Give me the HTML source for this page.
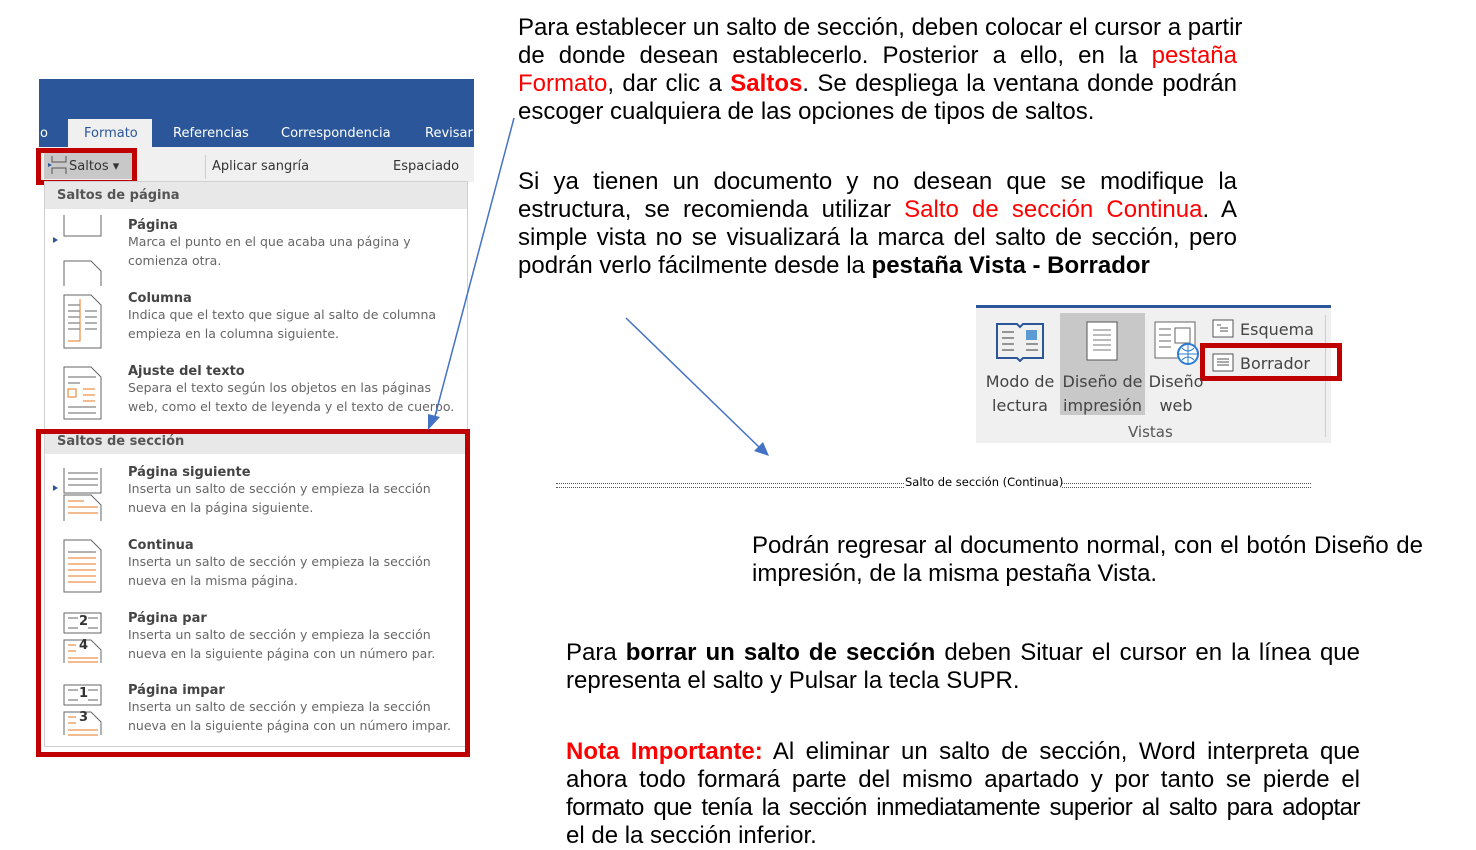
<!DOCTYPE html>
<html><head><meta charset="utf-8"><style>
*{margin:0;padding:0;box-sizing:border-box}
body{width:1476px;height:847px;background:#fff;position:relative;overflow:hidden;font-family:"Liberation Sans",Arial,sans-serif}
.a{position:absolute}
.ln{white-space:nowrap;text-align:justify;text-align-last:justify;height:28px;line-height:28px}
.ln.l{text-align-last:left}
.r{color:#f00}
.blk{font-size:24px;color:#000}
.ui{font-family:"DejaVu Sans","Liberation Sans",sans-serif}
.it .t{font-weight:bold;color:#444;font-size:13px}
.it .d{color:#666;font-size:12.5px;line-height:18.5px}
.it{position:absolute;left:128px}
</style></head><body>

<div class="a" style="left:39px;top:79px;width:435px;height:68px;background:#2b579a"></div>
<div class="a" style="left:68px;top:119px;width:84px;height:28px;background:#f0f0f0"></div>
<div class="a ui" style="left:40px;top:126px;color:#fff;font-size:13px">o</div>
<div class="a ui" style="left:84px;top:126px;color:#2b579a;font-size:13px">Formato</div>
<div class="a ui" style="left:173px;top:126px;color:#fff;font-size:13px">Referencias</div>
<div class="a ui" style="left:281px;top:126px;color:#fff;font-size:13px">Correspondencia</div>
<div class="a ui" style="left:425px;top:126px;color:#fff;font-size:13px">Revisar</div>
<div class="a" style="left:39px;top:147px;width:435px;height:35px;background:#f0f0f0"></div>
<div class="a" style="left:44px;top:151px;width:88px;height:28px;background:#c8c8c8"></div>
<svg class="a" style="left:46px;top:154px" width="22" height="22"><path d="M6 2v6h14V2M6 20v-6h14v6" fill="none" stroke="#555"/><path d="M2 9l4 2-4 2z" fill="#2b579a"/></svg>
<div class="a ui" style="left:69px;top:159px;color:#333;font-size:13px">Saltos ▾</div>
<div class="a" style="left:205px;top:155px;width:1px;height:24px;background:#ccc"></div>
<div class="a ui" style="left:212px;top:159px;color:#333;font-size:13px">Aplicar sangría</div>
<div class="a ui" style="left:393px;top:159px;color:#333;font-size:13px">Espaciado</div>
<div class="a" style="left:36px;top:148px;width:101px;height:37px;border:5px solid #c00000"></div>

<div class="a" style="left:44px;top:181px;width:424px;height:566px;background:#fff;border:1px solid #d0d0d0"></div>
<div class="a" style="left:45px;top:182px;width:422px;height:27px;background:#e8e8e8"></div>
<div class="a ui" style="left:57px;top:188px;font-size:13px;font-weight:bold;color:#555">Saltos de página</div>
<div class="a" style="left:45px;top:431px;width:422px;height:23px;background:#e8e8e8"></div>
<div class="a ui" style="left:57px;top:434px;font-size:13px;font-weight:bold;color:#555">Saltos de sección</div>

<svg class="a" style="left:50px;top:215px" width="60" height="530" fill="none" stroke="#666">
<path d="M14 0v21h37V0M14 71V46h27l10 10v15"/>
<path d="M3 22l5 3-5 3z" fill="#2b579a" stroke="none"/>
<path d="M14 80h27l10 10v43H14z M18 90h12M18 96h12M18 102h12M18 108h12M18 114h12M35 96h12M35 102h12M35 108h12M35 114h12" />
<path d="M30 84v42h-12" stroke="#e87722"/>
<path d="M14 152h27l10 10v42H14z M18 162h28M18 168h12M18 192h28M18 198h28"/>
<path d="M18 174h8v8h-8zM33 174h12M33 180h12M33 186h12" stroke="#e87722"/>
<path d="M14 253v25h37v-25M18 258h30M18 264h30M18 270h30"/>
<path d="M14 306V280h27l10 10v16"/>
<path d="M18 286h16M18 292h30M18 298h30" stroke="#e87722"/>
<path d="M3 270l5 3-5 3z" fill="#2b579a" stroke="none"/>
<path d="M14 325h27l10 10v42H14z M18 337h28"/>
<path d="M18 343h28M18 349h28M18 355h28M18 361h28M18 367h28" stroke="#e87722"/>
<path d="M14 398h37v20H14z M18 403h10M38 403h10M18 413h10M38 413h10"/>
<path d="M14 448v-23h27l10 10v13"/>
<path d="M18 430h8M18 436h8M18 443h30M18 447h30" stroke="#e87722"/>
<path d="M14 470h37v20H14z M18 475h10M38 475h10M18 485h10M38 485h10"/>
<path d="M14 520v-23h27l10 10v13"/>
<path d="M18 502h8M18 508h8M18 515h30M18 520h30" stroke="#e87722"/>
</svg>
<div class="a ui" style="left:79px;top:614px;font-size:13px;font-weight:bold;color:#333">2</div>
<div class="a ui" style="left:79px;top:638px;font-size:13px;font-weight:bold;color:#333">4</div>
<div class="a ui" style="left:79px;top:686px;font-size:13px;font-weight:bold;color:#333">1</div>
<div class="a ui" style="left:79px;top:710px;font-size:13px;font-weight:bold;color:#333">3</div>

<div class="it ui" style="top:218px"><div class="t">Página</div><div class="d">Marca el punto en el que acaba una página y<br>comienza otra.</div></div>
<div class="it ui" style="top:291px"><div class="t">Columna</div><div class="d">Indica que el texto que sigue al salto de columna<br>empieza en la columna siguiente.</div></div>
<div class="it ui" style="top:364px"><div class="t">Ajuste del texto</div><div class="d">Separa el texto según los objetos en las páginas<br>web, como el texto de leyenda y el texto de cuerpo.</div></div>
<div class="it ui" style="top:465px"><div class="t">Página siguiente</div><div class="d">Inserta un salto de sección y empieza la sección<br>nueva en la página siguiente.</div></div>
<div class="it ui" style="top:538px"><div class="t">Continua</div><div class="d">Inserta un salto de sección y empieza la sección<br>nueva en la misma página.</div></div>
<div class="it ui" style="top:611px"><div class="t">Página par</div><div class="d">Inserta un salto de sección y empieza la sección<br>nueva en la siguiente página con un número par.</div></div>
<div class="it ui" style="top:683px"><div class="t">Página impar</div><div class="d">Inserta un salto de sección y empieza la sección<br>nueva en la siguiente página con un número impar.</div></div>

<div class="a" style="left:36px;top:429px;width:434px;height:328px;border:5px solid #c00000"></div>

<svg class="a" style="left:0;top:0" width="1476" height="847">
<line x1="514" y1="118" x2="434" y2="420" stroke="#4472c4" stroke-width="1.5"/>
<path d="M428 430l0-16 12 3z" fill="#4472c4"/>
<line x1="626" y1="318" x2="760" y2="448" stroke="#4472c4" stroke-width="1.5"/>
<path d="M769 456l-15-5 9-9z" fill="#4472c4"/>
</svg>

<div class="a blk" style="left:518px;top:14px;width:719px">
<div class="ln">Para establecer un salto de sección, deben colocar el cursor a partir</div>
<div class="ln">de donde desean establecerlo. Posterior a ello, en la <span class="r">pestaña</span></div>
<div class="ln"><span class="r">Formato</span>, dar clic a <b class="r">Saltos</b>. Se despliega la ventana donde podrán</div>
<div class="ln l">escoger cualquiera de las opciones de tipos de saltos.</div>
</div>
<div class="a blk" style="left:518px;top:168px;width:719px">
<div class="ln">Si ya tienen un documento y no desean que se modifique la</div>
<div class="ln">estructura, se recomienda utilizar <span class="r">Salto de sección Continua</span>. A</div>
<div class="ln">simple vista no se visualizará la marca del salto de sección, pero</div>
<div class="ln l">podrán verlo fácilmente desde la <b>pestaña Vista - Borrador</b></div>
</div>

<div class="a" style="left:976px;top:305px;width:355px;height:3px;background:#2b579a"></div>
<div class="a" style="left:976px;top:308px;width:355px;height:135px;background:#f0f0f0"></div>
<div class="a" style="left:1060px;top:313px;width:85px;height:102px;background:#c8c8c8"></div>
<div class="a" style="left:1325px;top:315px;width:1px;height:122px;background:#ccc"></div>
<svg class="a" style="left:995px;top:320px" width="50" height="42" fill="none" stroke="#2b579a" stroke-width="2"><path d="M2 4h20l3 3 3-3h20v34H28l-3 3-3-3H2z"/><path d="M7 12h12M7 18h12M7 24h12M7 30h12M31 24h12M31 30h12" stroke="#777" stroke-width="1.5"/><rect x="31" y="10" width="11" height="10" fill="#5b9bd5" stroke="none"/></svg>
<svg class="a" style="left:1085px;top:320px" width="36" height="44" fill="#fff" stroke="#555"><rect x="2" y="2" width="30" height="38"/><path d="M8 10h18M8 15h18M8 20h18M8 25h18M8 30h18" stroke="#777"/></svg>
<svg class="a" style="left:1153px;top:320px" width="50" height="46" fill="#fff" stroke="#666"><rect x="2" y="2" width="40" height="36"/><path d="M6 9h12M6 15h12M6 21h12M6 27h12"/><rect x="22" y="8" width="15" height="15"/><circle cx="35" cy="34" r="10" fill="#fff" stroke="#2b7cd3" stroke-width="2"/><path d="M25 34h20M35 24v20M29 28q6 6 12 0M29 40q6-6 12 0" stroke="#2b7cd3"/></svg>
<svg class="a" style="left:1212px;top:319px" width="22" height="20" fill="#fff" stroke="#555"><rect x="1" y="1" width="20" height="17"/><path d="M5 6h4M8 9h8M8 12h8" /></svg>
<svg class="a" style="left:1212px;top:353px" width="22" height="20" fill="#fff" stroke="#555"><rect x="1" y="1" width="20" height="17"/><path d="M5 6h12M5 9h12M5 12h12"/></svg>
<div class="a ui" style="left:1240px;top:320px;font-size:16px;color:#444">Esquema</div>
<div class="a ui" style="left:1240px;top:354px;font-size:16px;color:#444">Borrador</div>
<div class="a" style="left:1200px;top:343px;width:142px;height:38px;border:5px solid #c00000"></div>
<div class="a ui" style="left:976px;top:370px;width:88px;text-align:center;font-size:16px;color:#444;line-height:24px">Modo de<br>lectura</div>
<div class="a ui" style="left:1060px;top:370px;width:85px;text-align:center;font-size:16px;color:#444;line-height:24px">Diseño de<br>impresión</div>
<div class="a ui" style="left:1148px;top:370px;width:56px;text-align:center;font-size:16px;color:#444;line-height:24px;white-space:nowrap">Diseño<br>web</div>
<div class="a ui" style="left:1128px;top:423px;font-size:15px;color:#555">Vistas</div>

<div class="a" style="left:556px;top:483px;width:348px;height:5px;border-top:1px dotted #555;border-bottom:1px dotted #555"></div>
<div class="a ui" style="left:905px;top:475px;font-size:11.5px;color:#000">Salto de sección (Continua)</div>
<div class="a" style="left:1062px;top:483px;width:249px;height:5px;border-top:1px dotted #555;border-bottom:1px dotted #555"></div>

<div class="a blk" style="left:752px;top:532px;width:671px">
<div class="ln">Podrán regresar al documento normal, con el botón Diseño de</div>
<div class="ln l">impresión, de la misma pestaña Vista.</div>
</div>
<div class="a blk" style="left:566px;top:639px;width:794px">
<div class="ln">Para <b>borrar un salto de sección</b> deben Situar el cursor en la línea que</div>
<div class="ln l">representa el salto y Pulsar la tecla SUPR.</div>
</div>
<div class="a blk" style="left:566px;top:738px;width:794px">
<div class="ln"><b class="r">Nota Importante:</b> Al eliminar un salto de sección, Word interpreta que</div>
<div class="ln">ahora todo formará parte del mismo apartado y por tanto se pierde el</div>
<div class="ln" style="letter-spacing:-0.5px">formato que tenía la sección inmediatamente superior al salto para adoptar</div>
<div class="ln l">el de la sección inferior.</div>
</div>
</body></html>
